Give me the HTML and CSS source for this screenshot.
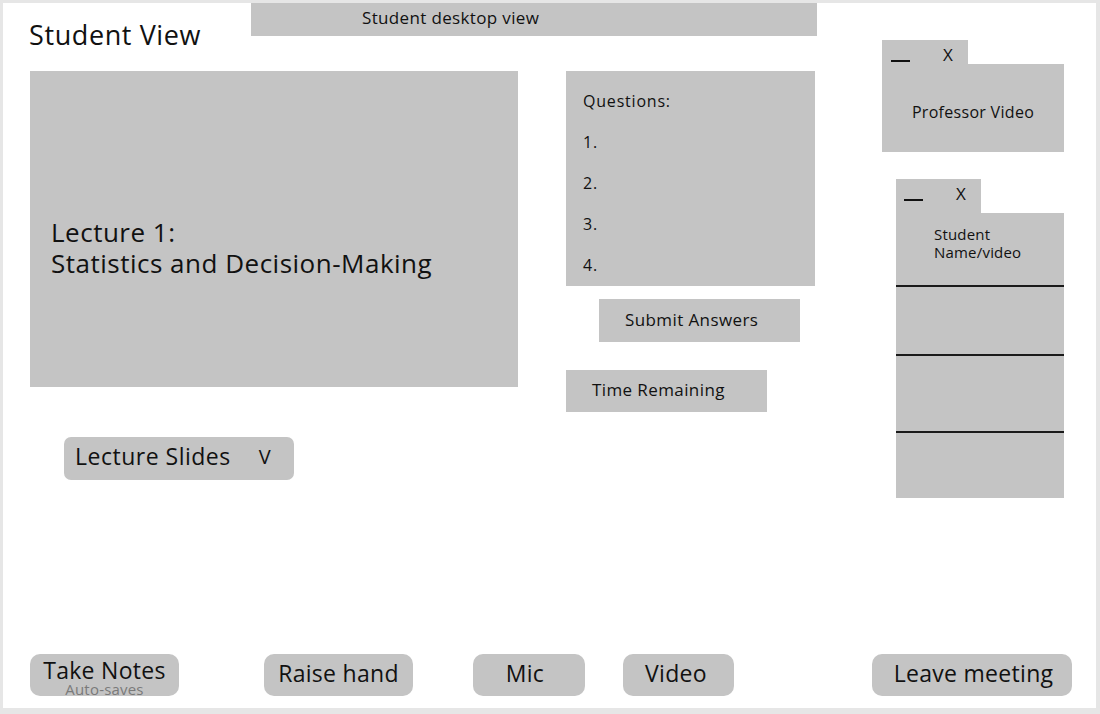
FILE: index.html
```html
<!DOCTYPE html>
<html lang="en">
<head>
<meta charset="utf-8">
<title>Student View</title>
<link rel="stylesheet" href="styles.css">
</head>
<body>
<div class="frame">
  <div class="workspace">
    <div class="content">
      <header class="top">
        <h1 class="title">Student View</h1>
        <div class="topbar">Student desktop view</div>
      </header>
      <div class="main">
        <div class="col-left">
          <div class="lecture">
            <p class="lecture-line">Lecture 1:</p>
            <p class="lecture-line">Statistics and Decision-Making</p>
          </div>
          <div class="dropdown"><span>Lecture Slides</span><span class="chev">V</span></div>
        </div>
        <div class="col-mid">
          <div class="questions">
            <p>Questions:</p>
            <p>1.</p>
            <p>2.</p>
            <p>3.</p>
            <p>4.</p>
          </div>
          <div class="submit">Submit Answers</div>
          <div class="timer">Time Remaining</div>
        </div>
      </div>
    </div>
    <aside class="side">
      <div class="win prof">
        <div class="tab"><span class="min"></span><span class="close">X</span></div>
        <div class="win-body prof-body">Professor Video</div>
      </div>
      <div class="win students">
        <div class="tab tall"><span class="min"></span><span class="close">X</span></div>
        <div class="win-body student-body">
          <div class="slot s1"><span class="slot-name">Student<br>Name/video</span></div>
          <div class="slot s2"></div>
          <div class="slot s3"></div>
          <div class="slot s4"></div>
        </div>
      </div>
    </aside>
  </div>
  <div class="toolbar">
    <div class="btn notes"><span class="btn-label">Take Notes</span><span class="sub">Auto-saves</span></div>
    <div class="btn hand">Raise hand</div>
    <div class="btn mic">Mic</div>
    <div class="btn video">Video</div>
    <div class="btn leave">Leave meeting</div>
  </div>
</div>
</body>
</html>
```

FILE: styles.css
```css
* { box-sizing: border-box; }

html, body {
  margin: 0;
  padding: 0;
  background: #e6e6e6;
}

body {
  font-family: "Open Sans", "Noto Sans", sans-serif;
  color: #111;
}

p { margin: 0; }

.frame {
  margin: 3px 0 0 3px;
  width: 1093px;
  height: 705px;
  background: #fff;
  display: flex;
  flex-direction: column;
}

.workspace {
  height: 651px;
  display: flex;
  flex: none;
}

.content {
  width: 814px;
  display: flex;
  flex-direction: column;
}

.top {
  height: 68px;
  display: flex;
  align-items: flex-start;
}

.title {
  margin: 16px 0 0 26px;
  width: 222px;
  font-size: 27px;
  letter-spacing: 0.6px;
  line-height: 32px;
  font-weight: 400;
}

.topbar {
  width: 566px;
  height: 33px;
  background: #c4c4c4;
  padding-left: 111px;
  font-size: 17px;
  letter-spacing: 0.35px;
  line-height: 30px;
}

.main {
  display: flex;
}

.col-left {
  margin-left: 27px;
  width: 488px;
  display: flex;
  flex-direction: column;
}

.lecture {
  height: 316px;
  background: #c4c4c4;
  padding: 146px 0 0 21px;
  display: flex;
  flex-direction: column;
}

.lecture-line {
  font-size: 26px;
  letter-spacing: 0.5px;
  line-height: 31px;
}

.dropdown {
  margin: 50px 0 0 34px;
  width: 230px;
  height: 43px;
  background: #c4c4c4;
  border-radius: 7px;
  display: flex;
  align-items: center;
  padding: 0 0 5px 11px;
  font-size: 23px;
  letter-spacing: 0.5px;
}

.chev {
  margin-left: 28px;
  font-size: 20px;
  letter-spacing: 0;
}

.col-mid {
  margin-left: 48px;
  width: 249px;
  display: flex;
  flex-direction: column;
}

.questions {
  height: 215px;
  background: #c4c4c4;
  padding: 10px 0 0 17px;
  font-size: 16px;
  letter-spacing: 0.8px;
  line-height: 41px;
}

.submit {
  margin: 13px 0 0 33px;
  width: 201px;
  height: 43px;
  background: #c4c4c4;
  padding-left: 26px;
  font-size: 17px;
  letter-spacing: 0.4px;
  line-height: 41px;
}

.timer {
  margin-top: 28px;
  width: 201px;
  height: 42px;
  background: #c4c4c4;
  padding-left: 26px;
  font-size: 17px;
  letter-spacing: 0.4px;
  line-height: 39px;
}

.side {
  margin-left: 65px;
  padding-top: 37px;
  display: flex;
  flex-direction: column;
  align-items: flex-start;
}

.win {
  display: flex;
  flex-direction: column;
  align-items: flex-start;
}

.tab {
  width: 86px;
  height: 24px;
  background: #c4c4c4;
  display: flex;
  align-items: flex-start;
  padding-left: 9px;
}

.tab.tall {
  width: 85px;
  height: 34px;
  padding-left: 8px;
}

.min {
  width: 19px;
  height: 2px;
  background: #111;
  margin-top: 20px;
}

.close {
  margin-left: 33px;
  font-size: 17px;
  line-height: 20px;
  margin-top: 5px;
}

.win-body {
  background: #c4c4c4;
}

.prof-body {
  width: 182px;
  height: 88px;
  text-align: center;
  font-size: 16px;
  letter-spacing: 0.3px;
  line-height: 20px;
  padding-top: 38px;
}

.students {
  margin: 27px 0 0 14px;
}

.student-body {
  width: 168px;
  height: 285px;
  display: flex;
  flex-direction: column;
}

.slot { border-bottom: 2px solid #1a1a1a; }
.s1 { height: 74px; padding: 12px 0 0 38px; }
.s2 { height: 69px; }
.s3 { height: 77px; }
.s4 { flex: 1; border-bottom: 0; }

.slot-name {
  display: block;
  font-size: 15px;
  letter-spacing: 0.2px;
  line-height: 18px;
}

.toolbar {
  display: flex;
  align-items: flex-start;
}

.btn {
  height: 42px;
  background: #c4c4c4;
  border-radius: 10px;
  display: flex;
  align-items: center;
  justify-content: center;
  font-size: 23px;
  letter-spacing: 0.3px;
  padding-bottom: 5px;
}

.notes {
  margin-left: 27px;
  width: 149px;
  flex-direction: column;
  justify-content: flex-start;
  padding: 3px 0 0;
}

.btn-label { line-height: 26px; }

.sub {
  font-size: 15px;
  letter-spacing: 0.2px;
  line-height: 12px;
  color: #7a7a7a;
  margin-top: 0;
}

.hand { margin-left: 85px; width: 149px; }
.mic { margin-left: 60px; width: 112px; padding-right: 8px; }
.video { margin-left: 38px; width: 111px; padding-right: 5px; }
.leave { margin-left: 138px; width: 200px; padding-left: 3px; }
```
